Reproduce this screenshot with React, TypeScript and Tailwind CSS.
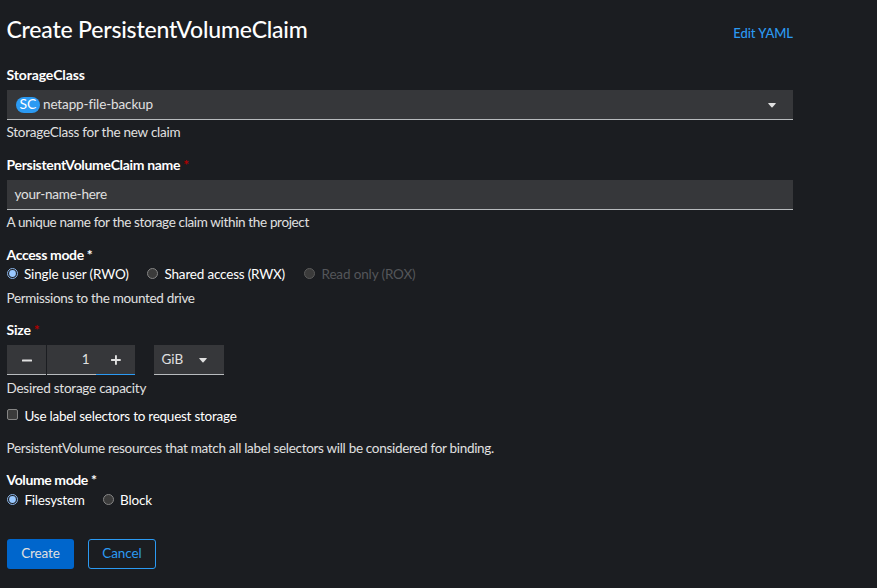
import type { ReactNode } from 'react';

function Label({ children, required, className }: { children: ReactNode; required?: boolean; className: string }) {
  return (
    <div className="-ml-[0.5px] flex h-5 items-center text-[14px] font-bold text-white">
      <span className={className}>{children}</span>
      {required && <span className="ml-[3px] text-[14px] text-[#b00000]">*</span>}
    </div>
  );
}

function Help({ children, className }: { children: ReactNode; className: string }) {
  return (
    <p className="-ml-[0.5px] h-5 text-[#e0e0e0]">
      <span className={className}>{children}</span>
    </p>
  );
}

function Radio({ checked, disabled }: { checked?: boolean; disabled?: boolean }) {
  return (
    <svg width="12" height="12" viewBox="0 0 12 12" className="mb-[3px] -ml-[1px] shrink-0">
      {checked ? (
        <>
          <circle cx="6.5" cy="6.5" r="5" fill="#1c1d21" stroke="#8ab4e8" />
          <circle cx="6.5" cy="6.5" r="3.4" fill="#99c8ff" />
        </>
      ) : (
        <circle cx="6.5" cy="6.5" r="5" fill="#3b3b3b" stroke={disabled ? '#5b5b5b' : '#858585'} />
      )}
    </svg>
  );
}

function Caret() {
  return (
    <svg width="8" height="5" viewBox="0 0 8 5" fill="#e0e0e0" className="mt-px">
      <path d="M0.7 0h6.6q.8 0 .3.7L4.5 4.3q-.5.5-1 0L.4.7Q-.1 0 .7 0z" />
    </svg>
  );
}

export default function App() {
  return (
    <main className="h-[588px] w-[877px] overflow-hidden bg-[#1b1d21] pl-[7px] font-['Lato',sans-serif] text-[13.5px] leading-5 whitespace-nowrap text-white">
      <div className="w-[786px]">
        <header className="flex h-[65px] justify-between pt-[14px]">
          <h1 className="-ml-[0.5px] text-[23px] leading-[30px] font-medium tracking-[-0.2px]">Create PersistentVolumeClaim</h1>
          <a className="pt-[9px] text-[13px] font-medium tracking-[-0.05px] text-[#2b9af3]">Edit YAML</a>
        </header>

        <Label className="tracking-[-0.12px]">StorageClass</Label>
        <div className="mt-[5px] flex h-[30px] items-center border-b border-[#b8bbbe] bg-[#36373a] pr-[17px] pl-[9px] text-[#e0e0e0]">
          <span className="flex h-4 w-6 items-center justify-center rounded-full bg-[#2b9af3] text-[14px] text-white"><span className="pb-px">SC</span></span>
          <span className="ml-[3px] flex-1 pb-[2px] tracking-[-0.13px]">netapp-file-backup</span>
          <Caret />
        </div>
        <div className="mt-[2px]"><Help className="tracking-[-0.25px]">StorageClass for the new claim</Help></div>

        <div className="mt-[13px]"><Label required className="tracking-[-0.32px]">PersistentVolumeClaim name</Label></div>
        <div className="mt-[5px] flex h-[30px] items-center border-b border-[#b8bbbe] bg-[#36373a] pb-[2px] pl-[7.5px] text-[#e0e0e0]">
          <span className="tracking-[-0.22px]">your-name-here</span>
        </div>
        <div className="mt-[2px]"><Help className="tracking-[-0.35px]">A unique name for the storage claim within the project</Help></div>

        <div className="mt-[13px]"><Label className="tracking-[-0.35px]">Access mode *</Label></div>
        <div className="flex h-[18px] items-center">
          <label className="flex w-[140px] items-center gap-[6px]"><Radio checked /><span className="tracking-[-0.15px]">Single user (RWO)</span></label>
          <label className="flex w-[157px] items-center gap-[6.5px]"><Radio /><span className="tracking-[-0.19px]">Shared access (RWX)</span></label>
          <label className="flex items-center gap-[6.5px] text-[#54565a]"><Radio disabled /><span className="tracking-[-0.14px]">Read only (ROX)</span></label>
        </div>
        <div className="mt-[5px]"><Help className="tracking-[-0.33px]">Permissions to the mounted drive</Help></div>

        <div className="mt-[12px]"><Label required className="tracking-[-0.2px]">Size</Label></div>
        <div className="mt-[5px] flex h-[30px] text-[#e0e0e0]">
          <button className="flex w-[39px] items-center justify-center border-b border-[#b8bbbe] bg-[#36373a]">
            <svg width="10" height="3" viewBox="0 0 10 3" className="mt-[2px]"><rect y="0.4" width="10" height="2" rx="0.5" fill="#e0e0e0" /></svg>
          </button>
          <span className="ml-px flex w-[49px] items-center justify-end border-b border-[#b8bbbe] bg-[#36373a] pr-[6.5px] pb-[2px]">1</span>
          <button className="flex w-[39px] items-center justify-center border-b border-[#2b9af3] bg-[#36373a]">
            <svg width="10" height="10" viewBox="0 0 10 10" fill="#e0e0e0" className="mt-px"><path d="M4 0.2h1.9v3.9h3.8v1.8H5.9v3.9H4V5.9H0.1V4.1H4z" /></svg>
          </button>
          <div className="ml-[19px] flex w-[70px] items-center justify-between border-b border-[#b8bbbe] bg-[#36373a] pr-[17px] pl-[7.5px]">
            <span className="pb-[2px]">GiB</span>
            <Caret />
          </div>
        </div>
        <div className="mt-[3px]"><Help className="tracking-[-0.24px]">Desired storage capacity</Help></div>

        <label className="mt-[8px] flex h-5 items-center gap-[6.5px]">
          <span className="mb-[4px] h-[11px] w-[11px] rounded-[2px] border border-[#858585] bg-[#3b3b3b]" />
          <span className="tracking-[-0.25px]">Use label selectors to request storage</span>
        </label>
        <div className="mt-[12px]"><Help className="tracking-[-0.31px]">PersistentVolume resources that match all label selectors will be considered for binding.</Help></div>

        <div className="mt-[12px]"><Label className="tracking-[-0.4px]">Volume mode *</Label></div>
        <div className="flex h-5 items-center">
          <label className="flex w-[95.5px] items-center gap-[6.5px]"><Radio checked /><span className="tracking-[-0.25px]">Filesystem</span></label>
          <label className="flex items-center gap-[6.5px]"><Radio /><span className="tracking-[-0.15px]">Block</span></label>
        </div>

        <footer className="mt-[29px] flex gap-[14px]">
          <button className="h-[30px] w-[67px] rounded-[3px] bg-[#0066cc] pb-[2px] tracking-[-0.1px] text-[#e0e0e0]">Create</button>
          <button className="h-[30px] w-[68px] rounded-[3px] border border-[#2b9af3] pb-[2px] tracking-[-0.1px] text-[#2b9af3]">Cancel</button>
        </footer>
      </div>
    </main>
  );
}
